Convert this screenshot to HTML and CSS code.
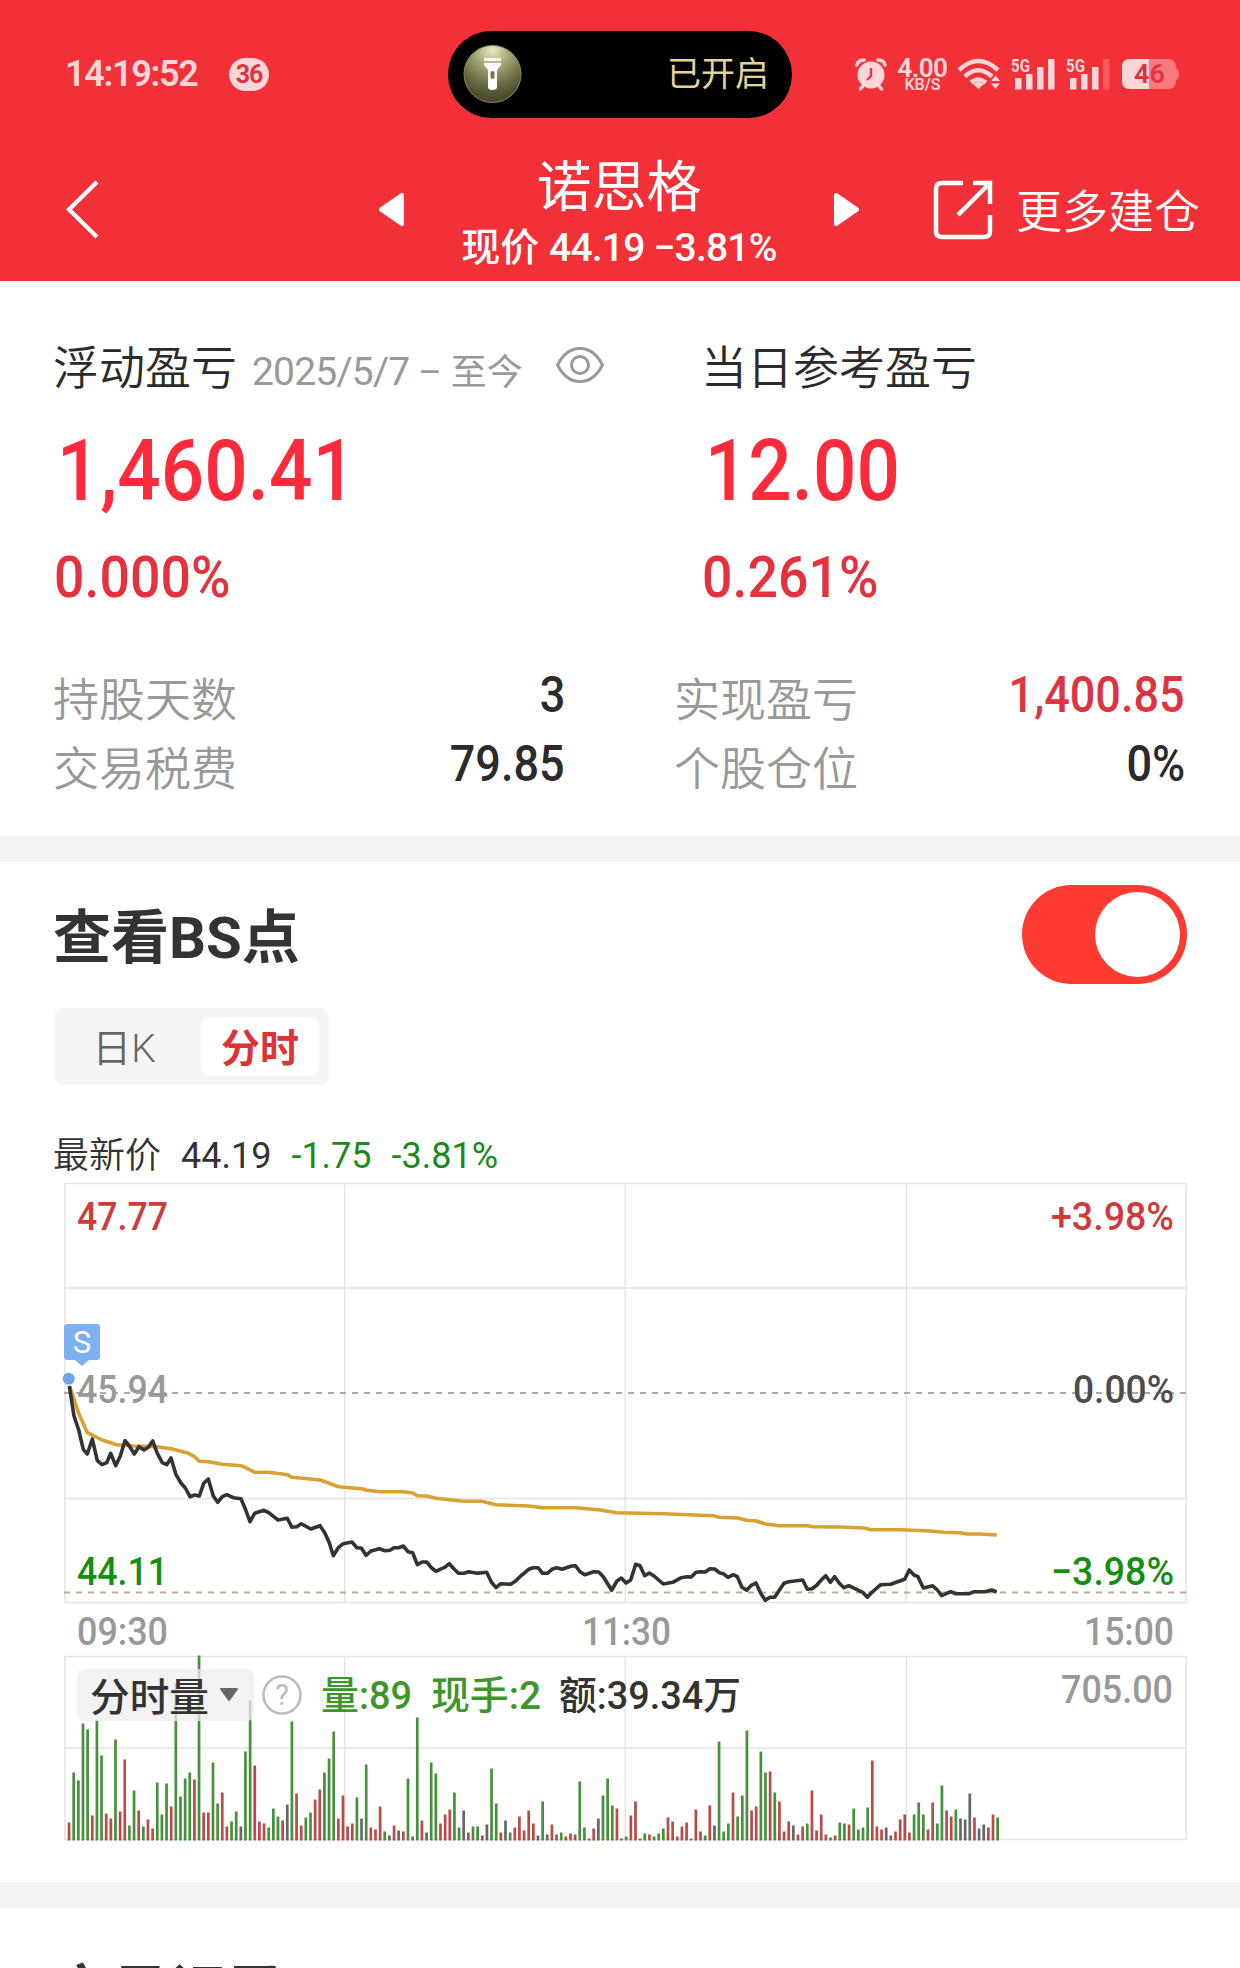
FILE: index.html
```
<!DOCTYPE html>
<html lang="zh-CN">
<head>
    <meta charset="UTF-8">
    <title>诺思格</title>
    <link rel="stylesheet" href="styles.css">
</head>
<body>
    <header class="header">
        <!-- 状态栏 -->
        <div class="status">
            <span class="time">14:19:52</span>
            <span class="badge">36</span>
            <div class="island">
                <svg class="torch" viewBox="0 0 58 58">
                    <defs>
                        <radialGradient id="glow" cx="50%" cy="8%" r="90%">
                            <stop offset="0" stop-color="#e9eac0"/>
                            <stop offset="0.35" stop-color="#a3a474"/>
                            <stop offset="0.7" stop-color="#68683f"/>
                            <stop offset="1" stop-color="#45452a"/>
                        </radialGradient>
                    </defs>
                    <circle cx="29" cy="29" r="28.500" fill="url(#glow)" stroke="#8a8b60"/>
                    <path d="M20.500 13h17v3h-17zM20.500 18h17v2l-4 5v17q0 3-4.500 3t-4.500-3V25l-4-5z" fill="#fff"/>
                    <rect x="27" y="26" width="4" height="8" rx="2" fill="#77774e"/>
                </svg>
                <span>已开启</span>
            </div>
            <svg class="icon-alarm" viewBox="0 0 32 32">
                <circle cx="16" cy="17" r="13.500" fill="currentColor"/>
                <path d="M2 7Q3 2 9 2M30 7Q29 2 23 2M8 28l-2.500 3M24 28l2.500 3" fill="none" stroke="currentColor" stroke-width="3.500" stroke-linecap="round"/>
                <path d="M16 10v8l-4 4" fill="none" stroke="#f23039" stroke-width="2.200"/>
            </svg>
            <div class="speed"><b>4.00</b><i>KB/S</i></div>
            <svg class="icon-wifi" viewBox="0 0 44 32">
                <g fill="none" stroke="currentColor" stroke-width="4.500">
                    <path d="M2 12Q21-6 41 12"/>
                    <path d="M8 18.500Q21 6 35 18.500"/>
                    <path d="M14 24.500Q21 18.500 29 24.500"/>
                </g>
                <path d="M16 26q5.500-4 11 0l-5.500 5z" fill="currentColor"/>
                <path d="M34 23l4.500-5.500 4.500 5.500zM34 25.500l4.500 5.500 4.500-5.500z" fill="currentColor"/>
            </svg>
            <svg class="icon-signal" viewBox="0 0 44 32">
                <text x="0" y="13.500" textLength="19" lengthAdjust="spacingAndGlyphs">5G</text>
                <path d="M4 20h6.500v11.500H4zM15 16h6.500v15.500H15zM26 9h6.500v22.500H26zM37 1h6.500v30.500H37z" fill="currentColor"/>
            </svg>
            <svg class="icon-signal" viewBox="0 0 44 32">
                <text x="0" y="13.500" textLength="19" lengthAdjust="spacingAndGlyphs">5G</text>
                <path d="M4 20h6.500v11.500H4zM15 16h6.500v15.500H15zM26 9h6.500v22.500H26z" fill="currentColor"/>
                <path d="M37 1h6.500v30.500H37z" fill="#f9595f"/>
            </svg>
            <svg class="icon-battery" viewBox="0 0 57 30">
                <path d="M8 0h38q8 0 8 9 3 1 3 6t-3 6q0 9-8 9H8q-8 0-8-8V8q0-8 8-8z" fill="#f9797f"/>
                <path d="M27 0H8Q0 0 0 8v14q0 8 8 8h19z" fill="#ffd5d8"/>
                <text x="12" y="24" textLength="31" lengthAdjust="spacingAndGlyphs"><tspan fill="#e0303b">4</tspan><tspan fill="#e8333d">6</tspan></text>
            </svg>
        </div>

        <!-- 标题栏 -->
        <nav class="nav">
            <svg class="back" viewBox="0 0 33 59">
                <path d="M31 2L3 29.500 31 57" fill="none" stroke="#fff" stroke-width="4.200"/>
            </svg>
            <svg class="prev" viewBox="0 0 27 33">
                <path d="M24 2L3 16.500 24 31z" fill="#fff" stroke="#fff" stroke-width="4" stroke-linejoin="round"/>
            </svg>
            <div class="stock">
                <h1>诺思格</h1>
                <p>现价 <span class="quote">44.19 −3.81%</span></p>
            </div>
            <svg class="next" viewBox="0 0 27 33">
                <path d="M3 2l21 14.500L3 31z" fill="#fff" stroke="#fff" stroke-width="4" stroke-linejoin="round"/>
            </svg>
            <svg class="share" viewBox="0 0 60 60">
                <path d="M30 3H9Q3 3 3 9v42q0 6 6 6h42q6 0 6-6V35M40 3h17v21M57 3L25 35" fill="none" stroke="#fff" stroke-width="4.500"/>
            </svg>
            <span class="more">更多建仓</span>
        </nav>
    </header>

    <!-- 盈亏 -->
    <section class="profit">
        <div class="cols">
            <div class="col">
                <div class="label">
                    <span>浮动盈亏</span>
                    <span class="range"><span class="date">2025/5/7</span> – 至今</span>
                    <svg class="eye" viewBox="0 0 48 36">
                        <path d="M1.500 18Q10 1.500 24 1.500T46.500 18Q38 34.500 24 34.500T1.500 18z"/>
                        <circle cx="24" cy="18" r="8.500"/>
                    </svg>
                </div>
                <div class="amount">1,460.41</div>
                <div class="percent">0.000%</div>
            </div>
            <div class="col">
                <div class="label"><span>当日参考盈亏</span></div>
                <div class="amount">12.00</div>
                <div class="percent">0.261%</div>
            </div>
        </div>
        <div class="stats">
            <div class="stat"><span>持股天数</span><b>3</b></div>
            <div class="stat"><span>实现盈亏</span><b class="up">1,400.85</b></div>
            <div class="stat"><span>交易税费</span><b>79.85</b></div>
            <div class="stat"><span>个股仓位</span><b>0%</b></div>
        </div>
    </section>

    <!-- 分时图 -->
    <section class="bs">
        <div class="bs-head">
            <h2>查看BS点</h2>
            <div class="toggle"><div class="knob"></div></div>
        </div>
        <div class="tabs">
            <div class="tab">日K</div>
            <div class="tab active">分时</div>
        </div>
        <div class="latest">
            <span>最新价</span>
            <span class="price">44.19</span>
            <span class="down">-1.75</span>
            <span class="down">-3.81%</span>
        </div>
        <svg class="chart" viewBox="54 1180 1140 666">
            <g class="grid">
                <path d="M65 1183.500H1186V1602.500H65zM65 1288H1186M65 1498.500H1186M344.700 1183V1602M625.300 1183V1602M906.300 1183V1602"/>
                <path d="M65 1656.500H1186V1839.500H65zM65 1748H1186M344.700 1656V1840M625.300 1656V1840M906.300 1656V1840"/>
            </g>
            <path class="base" d="M64 1393H1186"/>
            <path class="now" d="M64 1592.500H1186"/>

            <text class="axis red" x="77" y="1229.500" textLength="91" lengthAdjust="spacingAndGlyphs">47.77</text>
            <text class="axis red" x="1051" y="1229.500" textLength="123" lengthAdjust="spacingAndGlyphs">+3.98%</text>
            <text class="axis gray" x="77" y="1403" textLength="91" lengthAdjust="spacingAndGlyphs">45.94</text>
            <text class="axis zero" x="1073" y="1403" textLength="101" lengthAdjust="spacingAndGlyphs">0.00%</text>
            <text class="axis green" x="77" y="1585" textLength="91" lengthAdjust="spacingAndGlyphs">44.11</text>
            <text class="axis green" x="1051" y="1585" textLength="123" lengthAdjust="spacingAndGlyphs">−3.98%</text>
            <text class="axis gray" x="77" y="1645" textLength="91" lengthAdjust="spacingAndGlyphs">09:30</text>
            <text class="axis gray" x="582" y="1645" textLength="89" lengthAdjust="spacingAndGlyphs">11:30</text>
            <text class="axis gray" x="1084" y="1645" textLength="90" lengthAdjust="spacingAndGlyphs">15:00</text>
            <text class="axis gray" x="1061" y="1703" textLength="112" lengthAdjust="spacingAndGlyphs">705.00</text>

            <polyline class="avg" points="70,1387 78.7,1413.3 87.3,1432.7 92.3,1435 102,1440 116.7,1444.7 133.3,1446 156.7,1446.7 171.3,1448.7 186.7,1452.7 194.7,1456.7 199.3,1461.3 208.3,1461.7 222.3,1464.3 241,1465.7 245.7,1467.7 254.7,1472.3 268.7,1472.3 287.3,1474.7 292,1477.3 320,1480 329.3,1483.3 338.3,1486.7 362,1488.7 366.7,1490.3 380,1491.7 403.3,1491.7 412.7,1493 417.3,1495.7 426.7,1496 436,1498.3 463.3,1501.3 482,1501.3 496,1504.7 528.7,1506 542.7,1507.7 575.3,1507.7 598.7,1509.7 616.7,1512.7 663.3,1513.7 713.3,1515.7 719.3,1517.3 737.3,1518 746.7,1520.3 756,1521 764.7,1523.7 778.7,1525.7 806.7,1525.7 813.3,1526.7 840,1527 864,1528 871.3,1529.7 900,1529.7 930,1531 943.3,1532.3 960,1532.7 966.7,1534 980,1534 996.7,1535"/>
            <polyline class="line" points="69.3,1386 74,1416 78.7,1430 83.3,1449.3 87.3,1454 92.3,1439 97.3,1460.7 102,1464.7 106.7,1462.7 110.7,1453.3 115.7,1465.7 120.3,1456 125,1440.7 129.3,1446 134.3,1454 139,1446.7 144,1450 148.3,1447.3 152.7,1441 157.3,1453.3 162.3,1462.7 166.7,1464.7 171,1458 176,1474.7 180.7,1482.7 185.3,1488 190,1496.7 194.7,1495 199.3,1496 203.7,1483.3 208.3,1479 213.3,1496 217.7,1502.3 222.3,1496.7 226.7,1494.7 233.3,1497.7 241,1498.7 245.7,1510 250,1521.7 254.7,1513.3 264,1510.3 268.7,1512.7 278,1520 287.3,1518.3 292,1527.3 296.7,1526.7 301.3,1523.7 310.7,1529 320,1525.7 324.7,1532.7 329.3,1542.7 333.3,1555.7 338.3,1547.7 343.3,1543.7 352,1542 356.7,1547.7 361.3,1548 366,1555.3 371,1551 379.3,1548.7 385,1550.7 390,1550.3 394,1547.7 398.7,1547.7 403.3,1546 408,1551.7 412.7,1552.7 417.3,1564.7 422,1562 426.7,1562 431.3,1567.7 436,1571.3 440,1569.3 444.7,1567.3 449.3,1563.7 454,1569 458.7,1573.3 464,1573.3 468.7,1571.7 477.3,1573.3 486.7,1572.3 491.3,1582 496,1587.7 500.7,1583.7 510.7,1584.3 515.3,1581.3 520,1576.7 528.7,1569.3 533.3,1567.7 538,1567.7 542.7,1573.3 547.3,1573.3 552,1569.3 556.7,1567.7 562,1569.3 570.7,1566.3 575.3,1565.7 580,1571.7 584.7,1574.7 594,1571.7 598.7,1572 603.3,1576.7 607.3,1583.3 611.7,1590.3 616.7,1581.3 621.3,1578 626,1583 630.7,1580 635.7,1564.3 640,1565.7 644.7,1575.7 649.3,1573 654,1576 663.3,1584 672.7,1582.3 681.3,1577.7 686.7,1576.7 691.3,1577 696,1572.3 700.7,1571.7 705.3,1572 710,1568.7 714.7,1569 719.3,1572.7 723.3,1573.7 728,1577.3 733.3,1574.7 737.3,1576.7 742,1587.3 746.7,1590.3 751.3,1585.3 756,1583 760.7,1593.3 765.3,1600.3 770,1597.3 774.7,1597.3 779.3,1590.3 784,1583.3 788.7,1581.7 802.7,1580 807.3,1589.3 812,1588.7 816.7,1585.3 821.3,1580 825.7,1575.7 830.3,1582.3 834.7,1576.7 839.3,1583.3 844,1587.7 848.7,1585.7 862.7,1592.3 867.3,1597.3 872,1592.3 880.7,1584.7 890.7,1584.3 904.7,1579.3 909.3,1570 914,1575 918,1576.7 923.3,1588 932.7,1585.7 937.3,1590 941.7,1595.7 950.7,1591.7 956,1593.7 969.3,1593.7 974,1591.7 985,1591.7 991.7,1590 996.7,1592"/>

            <!-- 卖出点 -->
            <path d="M67 1324h30q3 0 3 3v30q0 3-3 3h-8l-7 6-7-6h-8q-3 0-3-3v-30q0-3 3-3z" fill="#7db0ee"/>
            <text class="mark" x="82" y="1353">S</text>
            <circle cx="68.700" cy="1378.700" r="6" fill="#6ba4e9"/>

            <g id="bars"></g>

            <rect x="77" y="1669" width="177" height="52" rx="7" fill="#eeeeee" fill-opacity="0.75"/>
            <text class="vol dark" x="90" y="1711" textLength="119" lengthAdjust="spacingAndGlyphs">分时量</text>
            <path d="M221 1689h16l-8 11z" fill="#666" stroke="#666" stroke-width="2" stroke-linejoin="round"/>
            <circle cx="282" cy="1695" r="18.500" fill="none" stroke="#bbb" stroke-width="2.500"/>
            <text class="help" x="282" y="1705">?</text>
            <text class="vol vgreen" x="321" y="1709" textLength="91" lengthAdjust="spacingAndGlyphs">量:89</text>
            <text class="vol vgreen" x="431" y="1709" textLength="110" lengthAdjust="spacingAndGlyphs">现手:2</text>
            <text class="vol dark" x="559" y="1709" textLength="182" lengthAdjust="spacingAndGlyphs">额:39.34万</text>
        </svg>
    </section>

    <section class="records">
        <h2>交易记录</h2>
    </section>

    <script>
        // 每分钟成交量: r 涨, g 跌, k 平
        const volume = 'r18 g68 g60 g117 g111 r25 g121 g85 r27 r22 g101 r29 r81 g15 g50 r30 g14 r21 r12 g58 ' +
            'g26 g57 r34 g157 g44 g62 g68 r61 g185 r28 r28 g78 g37 r48 r14 g19 g29 k14 g89 g140 ' +
            'r75 r19 r17 g13 g32 g24 r20 k36 g119 r47 r15 g23 g28 r41 r51 g68 g82 g109 r22 r45 ' +
            'r14 r17 g43 k22 g76 r13 r11 r34 g9 k5 r15 k10 r9 g62 k4 g123 r20 k8 g78 g67 ' +
            'r17 r26 r31 g48 g13 k30 r8 g14 g14 r5 k16 g72 g37 r8 k20 g8 r13 r24 r10 r30 ' +
            'r17 k5 g39 k6 r16 r6 g8 r4 r7 r6 g59 g13 r2 r12 k22 g45 g62 g35 r32 r2 ' +
            'g4 r25 r39 g2 g7 r6 g4 g7 g12 r23 r19 r4 r14 r18 g2 r31 r9 g5 r35 k15 ' +
            'g99 g9 g17 r48 g24 g45 g110 r30 r34 g89 g68 r69 g48 r39 r9 r19 k15 r6 r14 g17 ' +
            'r50 r10 r26 r6 g3 r5 g18 g17 r16 g32 g11 g13 g33 r80 r14 r11 k13 k5 r9 r21 ' +
            'r26 r8 g26 g38 g26 r11 r38 g17 g55 r30 r24 g31 k22 k21 k47 r23 k12 k16 r13 r26 g23';
        const colors = { r: '#b94a48', g: '#45903a', k: '#666666' };
        const bars = document.getElementById('bars');

        volume.split(' ').forEach((item, i) => {
            const height = Number(item.slice(1));
            const bar = document.createElementNS('http://www.w3.org/2000/svg', 'rect');
            bar.setAttribute('x', (67.7 + i * 4.643).toFixed(2));
            bar.setAttribute('y', 1840.5 - height);
            bar.setAttribute('width', 2.7);
            bar.setAttribute('height', height);
            bar.setAttribute('fill', colors[item[0]]);
            bars.appendChild(bar);
        });
    </script>
</body>
</html>
```
FILE: styles.css
```
* {
    box-sizing: border-box;
}

body {
    margin: 0;
    width: 1240px;
    height: 1968px;
    overflow: hidden;
    background: #fff;
    color: #2b2b2b;
    font-family: Roboto, "Noto Sans CJK SC", sans-serif;
}

h1, h2, p {
    margin: 0;
}

svg {
    display: block;
    flex: none;
    overflow: visible;
}

.header {
    height: 281px;
    background: #f23038;
    color: #fff;
}

.status {
    display: flex;
    align-items: center;
    height: 138px;
    padding: 10px 0 0 65px;
    color: #ffd5d8;
}

.time {
    width: 133px;
    font-size: 36px;
    font-weight: 600;
    letter-spacing: -1.3px;
    white-space: nowrap;
}

.badge {
    width: 40px;
    height: 33px;
    margin-left: 31px;
    border-radius: 17px;
    background: #ffd5d8;
    color: #d93640;
    font-size: 25px;
    font-weight: 700;
    line-height: 33px;
    letter-spacing: -1px;
    text-align: center;
}

.island {
    display: flex;
    align-items: center;
    justify-content: space-between;
    width: 344px;
    height: 87px;
    margin-left: 179px;
    padding: 0 23px 0 15px;
    border-radius: 44px;
    background: #000;
    color: #e3d29a;
    font-size: 34px;
    line-height: 84px;
}

.torch {
    width: 59px;
    height: 58px;
}

.icon-alarm {
    width: 32px;
    height: 32px;
    margin-left: 63px;
}

.speed {
    width: 51px;
    margin-left: 10px;
    text-align: center;
}

.speed b,
.speed i {
    display: block;
    font-style: normal;
    font-weight: 600;
    white-space: nowrap;
}

.speed b {
    font-size: 26px;
    line-height: 20px;
    letter-spacing: -0.5px;
}

.speed i {
    font-size: 16px;
    line-height: 13px;
}

.icon-wifi {
    width: 44px;
    height: 32px;
    margin-left: 9px;
}

.icon-signal {
    width: 44px;
    height: 32px;
    margin-left: 10px;
}

.icon-signal + .icon-signal {
    margin-left: 11px;
}

.icon-signal text {
    fill: currentColor;
    font-size: 18.5px;
    font-weight: 700;
}

.icon-battery {
    width: 57px;
    height: 30px;
    margin-left: 12px;
}

.icon-battery text {
    font-size: 26px;
    font-weight: 600;
}

.nav {
    display: flex;
    align-items: center;
    height: 143px;
    padding-left: 66px;
}

.back {
    width: 33px;
    height: 59px;
}

.prev,
.next {
    width: 27px;
    height: 33px;
}

.prev {
    margin-left: 279px;
}

.stock {
    width: 428px;
    padding-top: 11px;
    text-align: center;
}

.stock h1 {
    font-size: 55px;
    font-weight: 400;
    line-height: 66px;
}

.stock p {
    font-size: 39px;
    font-weight: 500;
    line-height: 56px;
    white-space: nowrap;
}

.quote {
    letter-spacing: -0.8px;
}

.share {
    width: 60px;
    height: 60px;
    margin-left: 73px;
}

.more {
    margin: -3px 0 0 23px;
    font-size: 46px;
    font-weight: 350;
    white-space: nowrap;
}

.profit {
    height: 581px;
    padding: 56px 54px 0;
    border-bottom: 26px solid #f4f4f4;
}

.cols {
    display: grid;
    grid-template-columns: 648px 1fr;
}

.label {
    display: flex;
    align-items: center;
    height: 60px;
    margin-left: -1px;
    font-size: 46px;
    font-weight: 350;
    white-space: nowrap;
}

.label > span:first-child {
    padding-bottom: 6px;
}

.label .range {
    margin: 3px 0 0 15px;
    color: #999;
    font-size: 36px;
    font-weight: 400;
}

.date {
    font-size: 39px;
    letter-spacing: -0.8px;
}

.eye {
    width: 48px;
    height: 36px;
    margin: -5px 0 0 33px;
    fill: none;
    stroke: #999;
    stroke-width: 3;
}

/* 数字收窄 */
.amount,
.percent {
    transform: scaleX(0.89);
    transform-origin: left;
    font-weight: 500;
}

.amount {
    margin-top: 24px;
    padding-left: 3px;
    color: #fb2b3b;
    font-size: 86px;
    line-height: 100px;
}

.percent {
    margin-top: 26px;
    color: #e5303e;
    font-size: 58px;
    line-height: 60px;
    transform: scaleX(0.925);
}

.stats {
    display: grid;
    grid-template-columns: 511px 510px;
    column-gap: 110px;
    margin-top: 52px;
}

.stat {
    display: flex;
    align-items: center;
    justify-content: space-between;
    height: 69.5px;
    color: #999;
    font-size: 46px;
    font-weight: 350;
}

.stat span {
    margin-left: -1px;
    padding-top: 4px;
}

.stat b {
    padding-top: 2px;
    color: #2b2b2b;
    font-size: 50px;
    font-weight: 500;
    transform: scaleX(0.9);
    transform-origin: right;
}

.stat .up {
    color: #de3440;
}

.bs {
    height: 1046px;
    padding: 23px 53px 0 54px;
    border-bottom: 26px solid #f4f4f4;
}

.bs-head {
    display: flex;
    align-items: center;
    justify-content: space-between;
    height: 99px;
}

h2 {
    margin-left: -1px;
    color: #333;
    font-size: 58px;
    font-weight: 700;
    line-height: 70px;
}

.bs-head h2 {
    padding-top: 6px;
}

.toggle {
    width: 165px;
    height: 99px;
    padding: 7px;
    border-radius: 50px;
    background: #fd3b31;
}

.knob {
    width: 85px;
    height: 85px;
    margin-left: auto;
    border-radius: 50%;
    background: #fff;
}

.tabs {
    display: flex;
    width: 275px;
    height: 77px;
    margin-top: 24px;
    padding: 9px 10px;
    border-radius: 10px;
    background: #f5f5f5;
}

.tab {
    flex: 1;
    padding: 2px 17px 0 0;
    border-radius: 9px;
    color: #666;
    font-size: 39px;
    font-weight: 350;
    line-height: 61px;
    text-align: center;
}

.active {
    flex: none;
    width: 118px;
    padding-right: 0;
    background: #fff;
    color: #dc3434;
    font-weight: 700;
}

.latest {
    display: flex;
    gap: 20px;
    height: 50px;
    margin: 45px 0 0 -1px;
    padding-top: 1px;
    color: #333;
    font-size: 36px;
    line-height: 50px;
}

.latest span:first-child {
    font-weight: 350;
}

.down {
    color: #1a8a1a;
}

.chart {
    width: 1140px;
    height: 666px;
}

.grid {
    fill: none;
    stroke: #e4e4e4;
    stroke-width: 1.5;
}

.base,
.now {
    fill: none;
    stroke: #aaa;
    stroke-width: 2;
    stroke-dasharray: 6 6;
}

.now {
    stroke: #c0ad8b;
}

.avg,
.line {
    fill: none;
    stroke: #d9a032;
    stroke-width: 3.6;
    stroke-linejoin: round;
}

.line {
    stroke: #333;
}

.axis {
    font-size: 39.5px;
    font-weight: 500;
}

.vol {
    font-size: 39px;
    font-weight: 500;
}

.mark {
    fill: #fff;
    font-size: 31px;
    text-anchor: middle;
}

.help {
    fill: #bbb;
    font-size: 29px;
    text-anchor: middle;
}

.red {
    fill: #cf3a3a;
}

.green {
    fill: #14900f;
}

.vgreen {
    fill: #3c962b;
}

.gray {
    fill: #999;
}

.zero {
    fill: #4d4d4d;
}

.dark {
    fill: #333;
}

.records {
    padding: 50px 54px 0;
}
```
